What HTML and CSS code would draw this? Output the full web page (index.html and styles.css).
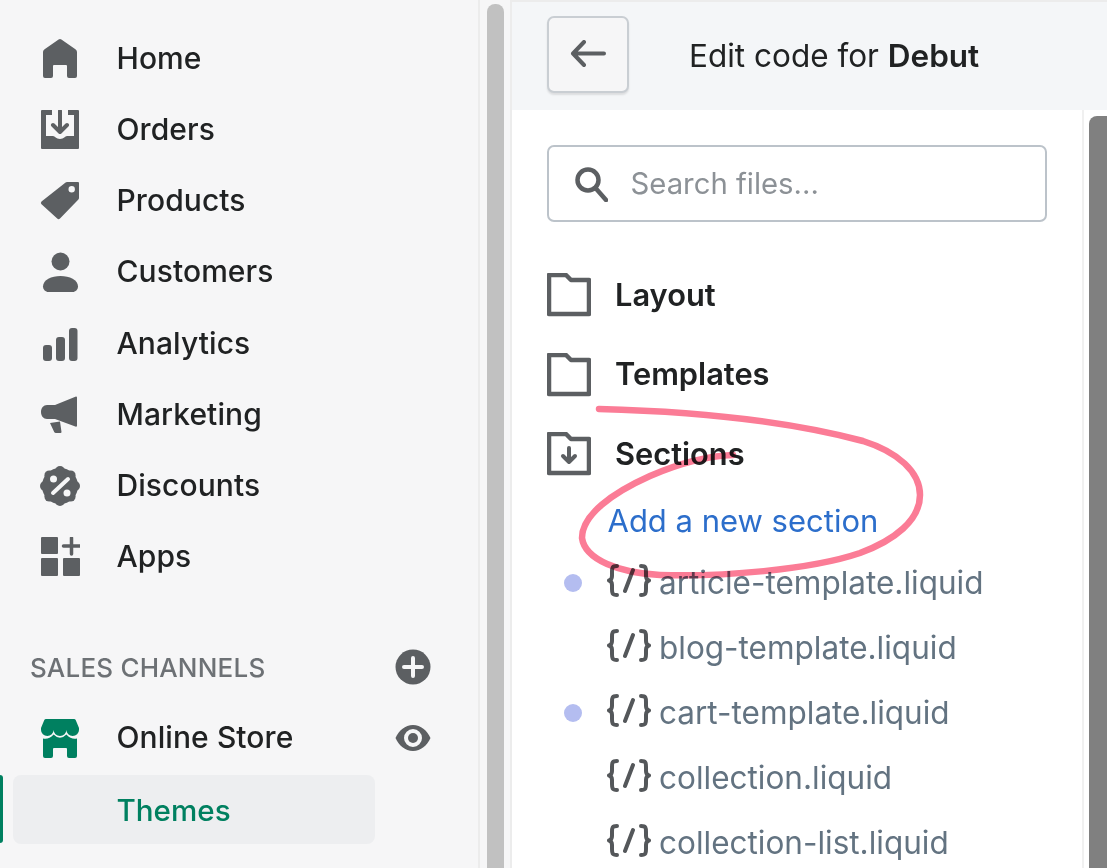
FILE: index.html
```html
<!DOCTYPE html>
<html lang="en">
<head>
<meta charset="utf-8">
<title>Edit code for Debut</title>
<link rel="stylesheet" href="styles.css">
</head>
<body>
<div class="app">
  <aside class="sidebar">
    <nav class="nav">
      <a class="nav-item"><svg class="icon" viewBox="0 0 40 40"><path d="M18.6.6a2.4 2.4 0 0 1 2.8 0l14 9.6a3.4 3.4 0 0 1 1.6 3V37a2 2 0 0 1-2 2h-6a2 2 0 0 1-2-2V27a1 1 0 0 0-1-1H14a1 1 0 0 0-1 1v10a2 2 0 0 1-2 2H5a2 2 0 0 1-2-2V13.200a3.400 3.400 0 0 1 1.600-3z"/></svg><span>Home</span></a>
      <a class="nav-item"><svg class="icon" viewBox="0 0 40 40"><path fill-rule="evenodd" d="M2 0h10v5H6v21h7c2 0 3 3 7 3s5-3 7-3h7V5h-6V0h10a1 1 0 0 1 1 1v37a1 1 0 0 1-1 1H2a1 1 0 0 1-1-1V1a1 1 0 0 1 1-1z"/><path class="arrow" d="M20 1v20M13 15l7 7 7-7"/></svg><span>Orders</span></a>
      <a class="nav-item"><svg class="icon" viewBox="0 0 40 40"><path fill-rule="evenodd" d="M27 1h11a1 1 0 0 1 1 1v15a2 2 0 0 1-.6 1.400L20 37.500a2 2 0 0 1-2.800 0L1.500 23.300a2 2 0 0 1 0-2.800L25.600 1.600A2 2 0 0 1 27 1zm4.700 4a3.200 3.200 0 1 0 0 6.400 3.200 3.200 0 0 0 0-6.400z"/></svg><span>Products</span></a>
      <a class="nav-item"><svg class="icon" viewBox="0 0 40 40"><circle cx="20.500" cy="9.500" r="9"/><path d="M20.500 24c9 0 17.500 4 17.500 10.500 0 3-2.500 5.500-5.500 5.500h-24C5.500 40 3 37.500 3 34.500 3 28 11.500 24 20.500 24z"/></svg><span>Customers</span></a>
      <a class="nav-item"><svg class="icon" viewBox="0 0 40 40"><rect x="3" y="21" width="9" height="16" rx="3"/><rect x="16" y="13" width="9" height="24" rx="3"/><rect x="29" y="4" width="8.500" height="33" rx="3"/></svg><span>Analytics</span></a>
      <a class="nav-item"><svg class="icon" viewBox="0 0 40 40"><path d="M36 1.500a1 1 0 0 1 1 1V31a1 1 0 0 1-1 .800L15 24H7c-3.500 0-6-3.200-6-7s2.500-7 6-7h8z"/><path d="M10 28l10-1.500 1.500 10.500a1 1 0 0 1-1 1h-4.500a2 2 0 0 1-1.800-1z"/></svg><span>Marketing</span></a>
      <a class="nav-item"><svg class="icon" viewBox="0 0 40 40"><circle cx="20" cy="20" r="18"/><circle cx="20" cy="5" r="5"/><circle cx="30.600" cy="9.400" r="5"/><circle cx="35" cy="20" r="5"/><circle cx="30.600" cy="30.600" r="5"/><circle cx="20" cy="35" r="5"/><circle cx="9.400" cy="30.600" r="5"/><circle cx="5" cy="20" r="5"/><circle cx="9.400" cy="9.400" r="5"/><path class="cut-line" d="M28 13L13 27"/><circle class="cut" cx="13.500" cy="13" r="3.500"/><circle class="cut" cx="27" cy="27" r="3.500"/></svg><span>Discounts</span></a>
      <a class="nav-item"><svg class="icon" viewBox="0 0 40 40"><rect x="1" y="0" width="17" height="17" rx="1"/><rect x="1" y="21" width="17" height="18" rx="1"/><rect x="23" y="21" width="17" height="18" rx="1"/><path class="plus" d="M31.500 1v16M23.500 9h16"/></svg><span>Apps</span></a>
    </nav>
    <div class="channels-head">
      <span class="channels-title">SALES CHANNELS</span>
      <svg class="side-action" viewBox="0 0 36 36"><circle cx="18" cy="18" r="17.500"/><path class="cut-line" d="M18 9v18M9 18h18"/></svg>
    </div>
    <a class="nav-item store"><svg class="icon icon-store" viewBox="0 0 40 40"><path d="M6 1h28a2 2 0 0 1 1.800 1.200L39 10v2a6.300 6 0 0 1-12.600 0 6.400 6 0 0 1-12.800 0 6.300 6 0 0 1-12.600 0v-2l3.200-7.800A2 2 0 0 1 6 1z"/><path d="M3 20.500Q8.500 22 13.600 16.500 20 23 26.400 16.500 31.500 22 37 20.500V38a2 2 0 0 1-2 2h-6a2 2 0 0 1-2-2v-7a1 1 0 0 0-1-1H14a1 1 0 0 0-1 1v7a2 2 0 0 1-2 2H5a2 2 0 0 1-2-2z"/></svg><span>Online Store</span><svg class="side-action eye" viewBox="0 0 36 28"><path fill-rule="evenodd" d="M18 1c8 0 14 5.500 17.500 13C32 21.500 26 27 18 27S4 21.500.5 14C4 6.500 10 1 18 1zm0 4a9 9 0 1 0 0 18 9 9 0 0 0 0-18z"/><circle cx="18" cy="14" r="5"/></svg></a>
    <div class="active-row"><span class="active-bar"></span><a class="sub-item">Themes</a></div>
  </aside>

  <div class="gutter"><div class="gutter-thumb"></div></div>

  <main class="editor">
    <header class="editor-head">
      <button class="back" type="button" aria-label="Back"><svg class="back-icon" viewBox="0 0 36 28"><path d="M34 13.500H4M14 2L3 13.500 14 25"/></svg></button>
      <h1 class="editor-title">Edit code for <strong>Debut</strong></h1>
    </header>
    <div class="editor-body">
      <div class="tree">
        <div class="search">
          <svg class="search-icon" viewBox="0 0 34 36"><circle cx="14" cy="14" r="10.500"/><path d="M21.500 22L32 34"/></svg>
          <span class="search-text">Search files...</span>
        </div>
        <div class="folder"><svg class="folder-icon" viewBox="0 0 44 44"><path d="M2 2h17l5 5h18v34H2z"/></svg><span>Layout</span></div>
        <div class="folder"><svg class="folder-icon" viewBox="0 0 44 44"><path d="M2 2h17l5 5h18v34H2z"/></svg><span>Templates</span></div>
        <div class="folder"><svg class="folder-icon" viewBox="0 0 44 44"><path d="M2 2h17l5 5h18v34H2z"/><path class="folder-arrow" d="M22 16v14M16 24l6 6 6-6"/></svg><span>Sections</span></div>
        <a class="add-link">Add a new section</a>
        <ul class="files">
          <li class="file changed"><svg class="code-icon" viewBox="0 0 44 33"><path d="M10 2C5 2 5 4 5 8v4c0 3-1 4-3 4.500 2 .5 3 1.500 3 4.500v4c0 4 0 6 5 6M34 2c5 0 5 2 5 6v4c0 3 1 4 3 4.500-2 .5-3 1.500-3 4.500v4c0 4 0 6-5 6M26 6l-8 21"/></svg><span>article-template.liquid</span></li>
          <li class="file"><svg class="code-icon" viewBox="0 0 44 33"><path d="M10 2C5 2 5 4 5 8v4c0 3-1 4-3 4.500 2 .5 3 1.500 3 4.500v4c0 4 0 6 5 6M34 2c5 0 5 2 5 6v4c0 3 1 4 3 4.500-2 .5-3 1.500-3 4.500v4c0 4 0 6-5 6M26 6l-8 21"/></svg><span>blog-template.liquid</span></li>
          <li class="file changed"><svg class="code-icon" viewBox="0 0 44 33"><path d="M10 2C5 2 5 4 5 8v4c0 3-1 4-3 4.500 2 .5 3 1.500 3 4.500v4c0 4 0 6 5 6M34 2c5 0 5 2 5 6v4c0 3 1 4 3 4.500-2 .5-3 1.500-3 4.500v4c0 4 0 6-5 6M26 6l-8 21"/></svg><span>cart-template.liquid</span></li>
          <li class="file"><svg class="code-icon" viewBox="0 0 44 33"><path d="M10 2C5 2 5 4 5 8v4c0 3-1 4-3 4.500 2 .5 3 1.500 3 4.500v4c0 4 0 6 5 6M34 2c5 0 5 2 5 6v4c0 3 1 4 3 4.500-2 .5-3 1.500-3 4.500v4c0 4 0 6-5 6M26 6l-8 21"/></svg><span>collection.liquid</span></li>
          <li class="file"><svg class="code-icon" viewBox="0 0 44 33"><path d="M10 2C5 2 5 4 5 8v4c0 3-1 4-3 4.500 2 .5 3 1.500 3 4.500v4c0 4 0 6 5 6M34 2c5 0 5 2 5 6v4c0 3 1 4 3 4.500-2 .5-3 1.500-3 4.500v4c0 4 0 6-5 6M26 6l-8 21"/></svg><span>collection-list.liquid</span></li>
        </ul>
      </div>
      <div class="tree-scroll"><div class="tree-thumb"></div></div>
    </div>
  </main>

  <svg class="scribble" viewBox="0 0 1107 868"><path d="M599 409C680 411 780 419 863 441C898 452 920 472 920 495C920 520 895 540 860 553C810 570 720 577 660 575C620 573 585 560 582 538C582 515 612 493 650 476C680 463 705 456 733 455"/></svg>
</div>
</body>
</html>
```
FILE: styles.css
```css
* { box-sizing: border-box; }
html, body { margin: 0; height: 100%; overflow: hidden; }
body { font-family: Inter, "Liberation Sans", sans-serif; background: #f6f6f7; color: #202223; }
.app { position: relative; display: flex; height: 868px; width: 1107px; overflow: hidden; }

.sidebar { width: 480px; flex: none; padding-top: 23.500px; border-right: 2px solid #ececec; }
.nav-item { display: flex; align-items: center; height: 71.150px; padding-left: 40px; font-size: 30px; font-weight: 500; line-height: 1; letter-spacing: .08px; color: #202223; }
.nav-item span { margin: -2px 0 0 36.500px; }
.icon { width: 40px; height: 40px; flex: none; fill: #5c5f62; }
.arrow { fill: none; stroke: #5c5f62; stroke-width: 4; stroke-linecap: round; stroke-linejoin: round; }
.cut { fill: #f6f6f7; }
.cut-line { fill: none; stroke: #f6f6f7; stroke-width: 4; stroke-linecap: round; }
.plus { fill: none; stroke: #5c5f62; stroke-width: 3.500; stroke-linecap: round; }

.channels-head { display: flex; align-items: center; justify-content: space-between; height: 36px; margin-top: 56.500px; padding: 0 47px 0 30px; }
.channels-title { font-size: 26px; font-weight: 500; color: #6d7175; letter-spacing: .2px; }
.side-action { width: 36px; height: 36px; flex: none; fill: #5c5f62; }
.store { margin-top: 17px; height: 72px; padding-right: 47px; }
.icon-store { fill: #008060; }
.store .eye { width: 36px; height: 28px; margin-left: auto; margin-top: -1px; }
.active-row { display: flex; height: 69px; margin-top: 1px; }
.active-bar { width: 3px; height: 68px; background: #008060; border-radius: 0 3px 3px 0; }
.sub-item { display: flex; align-items: center; width: 362px; margin-left: 10px; padding-left: 103.500px; background: #edeef0; border-radius: 8px; font-size: 29.600px; font-weight: 500; color: #008060; }

.gutter { width: 32px; flex: none; padding: 4px 6px 0 7px; border-right: 2px solid #ececec; }
.gutter-thumb { height: 100%; background: #c1c1c1; border-radius: 8px 8px 0 0; }

.editor { flex: 1; display: flex; flex-direction: column; min-width: 0; background: #fff; }
.editor-head { display: flex; align-items: center; height: 110px; flex: none; padding: 0 0 4px 35px; background: #f4f6f8; border-top: 2px solid #ececec; }
.back { display: flex; align-items: center; justify-content: center; width: 82px; height: 77px; padding: 0; background: #f6f6f7; border: 2px solid #c9ced3; border-radius: 7px; box-shadow: 0 2px 2px rgba(0,0,0,.1); }
.back-icon { width: 36px; height: 28px; fill: none; stroke: #5c5f62; stroke-width: 4; stroke-linecap: round; stroke-linejoin: round; }
.editor-title { margin: 3px 0 0 60px; font-size: 31.500px; font-weight: 400; line-height: 1; color: #202223; }
.editor-title strong { font-weight: 600; }

.editor-body { flex: 1; display: flex; min-height: 0; }
.tree { flex: 1; min-width: 0; padding: 35px 0 0 35px; }
.search { display: flex; align-items: center; width: 500px; height: 77px; padding-left: 25px; border: 2px solid #bcc3ca; border-radius: 7px; }
.search-icon { width: 34px; height: 36px; fill: none; stroke: #5c5f62; stroke-width: 4.500; stroke-linecap: round; }
.search-text { margin-left: 22.500px; font-size: 29.300px; color: #8c9196; }

.folder { display: flex; align-items: center; height: 44px; font-size: 30.800px; font-weight: 600; color: #202223; }
.search + .folder { margin-top: 51px; }
.folder + .folder { margin-top: 35.500px; }
.folder span { margin: -2px 0 0 24px; }
.folder-icon { width: 44px; height: 44px; flex: none; fill: none; stroke: #5c5f62; stroke-width: 4.500; stroke-linejoin: round; }
.folder-arrow { stroke-width: 4; stroke-linecap: round; }

.add-link { display: block; margin: 22px 0 0 60.500px; font-size: 31px; line-height: 46px; color: #2c6ecb; }
.files { list-style: none; margin: 7px 0 0; padding: 0; }
.file { position: relative; display: flex; align-items: center; height: 64.800px; padding-left: 60px; font-size: 31.500px; color: #637381; }
.file span { margin: -1px 0 0 8px; }
.changed::before { content: ""; position: absolute; left: 17px; top: 23px; width: 18px; height: 18px; border-radius: 50%; background: #b4bdf0; }
.code-icon { width: 44px; height: 33px; flex: none; fill: none; stroke: #54575a; stroke-width: 4; stroke-linecap: round; stroke-linejoin: round; margin-top: -5px; }

.tree-scroll { width: 25px; flex: none; padding: 6px 0 0 5px; background: #fff; border-left: 2px solid #f0f0f0; }
.tree-thumb { height: 100%; background: #808080; border-radius: 8px 0 0 0; }

.scribble { position: absolute; inset: 0; width: 1107px; height: 868px; fill: none; stroke: #fb7c96; stroke-width: 6.500; stroke-linecap: round; mix-blend-mode: multiply; pointer-events: none; }
```
